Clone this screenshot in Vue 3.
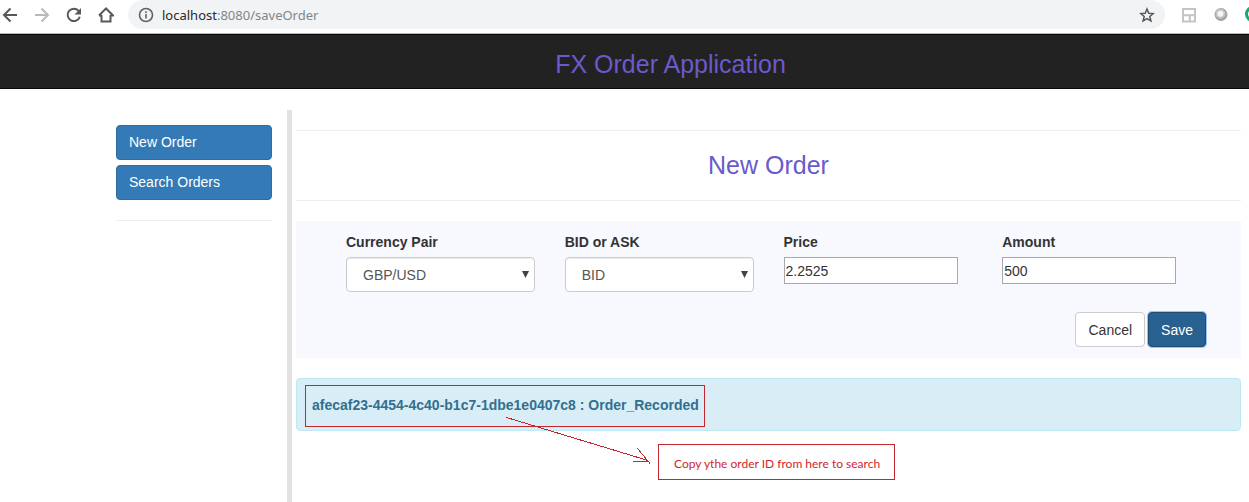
<script setup>
import { ref } from 'vue'

const pair = ref('GBP/USD')
const side = ref('BID')
const price = ref('2.2525')
const amount = ref('500')
const pairs = ['GBP/USD', 'EUR/USD', 'USD/JPY']
const sides = ['BID', 'ASK']
</script>

<template>
  <div class="window">
    <header class="toolbar">
      <button class="tool" type="button" aria-label="Back">
        <svg viewBox="0 0 16 16"><path d="M15 8H2.5M8.500 1.500 2 8l6.500 6.500" /></svg>
      </button>
      <button class="tool faded" type="button" aria-label="Forward">
        <svg viewBox="0 0 16 16"><path d="M1 8h12.500M7.500 1.500 14 8l-6.500 6.500" /></svg>
      </button>
      <button class="tool" type="button" aria-label="Reload">
        <svg viewBox="0 0 16 16"><path d="M13.800 9.800A6.200 6.200 0 1 1 12.600 3.800" /><path class="solid" d="M15 1v6.500H8.500z" /></svg>
      </button>
      <button class="tool" type="button" aria-label="Home">
        <svg viewBox="0 0 16 16"><path d="M3.500 8v6.500h9V8M1 8.500 8 1.500l7 7H12.500M1 8.500h2.500" /></svg>
      </button>
      <div class="address">
        <svg class="info" viewBox="0 0 16 16"><circle cx="8" cy="8" r="6.500" /><path d="M8 7v4.500M8 4.200v1.800" /></svg>
        <span class="url"><span class="host">localhost</span>:8080/saveOrder</span>
        <button class="tool star" type="button" aria-label="Bookmark">
          <svg viewBox="0 0 16 16"><path d="M8 2l1.750 4.200 4.550.350-3.500 2.950 1.100 4.450L8 11.550l-3.900 2.400 1.100-4.450L1.700 6.550l4.550-.350z" /></svg>
        </button>
      </div>
      <button class="tool ext" type="button" aria-label="Layout extension">
        <svg viewBox="0 0 16 16"><path d="M2 2h12v12.500H2zM2 8.200h12M8.800 8.200v6.300" /></svg>
      </button>
      <button class="tool ext" type="button" aria-label="Sphere extension">
        <svg viewBox="0 0 16 16"><circle cx="8" cy="7.500" r="6.500" fill="#a4a4a4" stroke="none" /><circle cx="7.500" cy="6.800" r="4" fill="#f6f6f6" stroke="#c4c4c4" /></svg>
      </button>
      <button class="tool ext last" type="button" aria-label="Green extension">
        <svg viewBox="0 0 16 16"><circle cx="8" cy="7" r="6.500" stroke="#12ad6b" stroke-width="3" /></svg>
      </button>
    </header>

    <nav class="navbar"><h1>FX Order Application</h1></nav>

    <div class="layout">
      <aside class="sidebar">
        <a class="nav-link" href="#new">New Order</a>
        <a class="nav-link" href="#search">Search Orders</a>
        <hr>
      </aside>

      <main class="content">
        <hr>
        <h2>New Order</h2>
        <hr>

        <form class="panel" @submit.prevent>
          <div class="fields">
            <div class="field">
              <label for="pair">Currency Pair</label>
              <div class="select">
                <select id="pair" v-model="pair"><option v-for="p in pairs" :key="p">{{ p }}</option></select>
                <svg viewBox="0 0 8 8"><path d="M0 0h8L4 8z" /></svg>
              </div>
            </div>
            <div class="field">
              <label for="side">BID or ASK</label>
              <div class="select">
                <select id="side" v-model="side"><option v-for="s in sides" :key="s">{{ s }}</option></select>
                <svg viewBox="0 0 8 8"><path d="M0 0h8L4 8z" /></svg>
              </div>
            </div>
            <div class="field">
              <label for="price">Price</label>
              <input id="price" v-model="price" type="text">
            </div>
            <div class="field">
              <label for="amount">Amount</label>
              <input id="amount" v-model="amount" type="text">
            </div>
          </div>
          <div class="actions">
            <button class="btn" type="button">Cancel</button>
            <button class="btn primary" type="submit">Save</button>
          </div>
        </form>

        <div class="alert" role="status">
          <strong>afecaf23-4454-4c40-b1c7-1dbe1e0407c8 : Order_Recorded</strong>
          <svg class="arrow" viewBox="0 0 148 50" shape-rendering="crispEdges">
            <path d="M0.500 1.500 142 44.500M131.500 32.500 144 47.500M126.500 45.500H142.500" />
          </svg>
          <div class="callout">Copy ythe order ID from here to search</div>
        </div>
      </main>
    </div>
  </div>
</template>

<style>
html, body, #app {
  height: 100%;
}
body {
  margin: 0;
  background: #fff;
}
</style>

<style scoped>
.window {
  min-height: 100%;
  display: flex;
  flex-direction: column;
  overflow: hidden;
  color: #333;
  font: 14px/20px "Liberation Sans", Arial, sans-serif;
}
.window * {
  box-sizing: border-box;
}
.toolbar {
  display: flex;
  align-items: center;
  gap: 16px;
  padding: 0 0 4px 2px;
  border-bottom: 1px solid #b9bdb9;
}
.tool {
  flex: none;
  display: block;
  width: 16px;
  height: 16px;
  padding: 0;
  border: 0;
  background: none;
  color: #55585c;
}
svg {
  display: block;
  fill: none;
  stroke: currentColor;
  stroke-width: 2;
}
.tool svg {
  width: 16px;
  height: 16px;
}
.tool .solid {
  fill: currentColor;
  stroke: none;
}
.faded {
  color: #b8babc;
}
.ext {
  color: #c4c4c4;
}
.last {
  margin-right: -12px;
}
.address {
  flex: 1;
  min-width: 0;
  height: 29px;
  margin-left: -2px;
  padding: 0 10px;
  border-radius: 15px;
  background: #f1f3f4;
  display: flex;
  align-items: center;
}
.info {
  width: 16px;
  height: 16px;
  margin-right: 8px;
  color: #5f6368;
  stroke-width: 1.600;
}
.url {
  flex: 1;
  color: #80868b;
  font: 13px/20px "Noto Sans", "Open Sans", sans-serif;
}
.host {
  color: #27292c;
}
.star svg {
  stroke-width: 1.500;
}
.navbar {
  border: 1px solid #080808;
  border-width: 1px 0;
  background: #222;
  text-align: center;
}
h1, h2 {
  margin: 0;
  color: #6a5acd;
  font-size: 25px;
  font-weight: 400;
  text-align: center;
}
h1 {
  padding: 15px 0 10px 92px;
  line-height: 28px;
}
h2 {
  padding: 20px 0;
  line-height: 29px;
}
.layout {
  flex: 1;
  margin-top: 21px;
  display: flex;
}
.sidebar {
  flex: none;
  width: 292px;
  padding: 15px 15px 0 116px;
  border-right: 5px solid #e2e2e2;
}
hr {
  height: 1px;
  margin: 0;
  border: 0;
  background: #eee;
}
.sidebar hr {
  margin-top: 20px;
}
.nav-link {
  display: block;
  margin-bottom: 5px;
  padding: 6px 12px 7px;
  border: 1px solid #2e6da4;
  border-radius: 4px;
  background: #337ab7;
  color: #fff;
  text-decoration: none;
}
.content {
  flex: 1;
  min-width: 0;
  padding: 20px 8px 0 4px;
}
.panel {
  margin: 20px 0;
  padding: 10px 35px 11px 50px;
  background: #f8f8ff;
}
.fields {
  display: grid;
  grid-template-columns: repeat(4, 1fr);
  gap: 30px;
  margin-right: 15px;
}
.field {
  min-width: 0;
}
label {
  display: block;
  margin-bottom: 5px;
  padding-top: 1px;
  font-weight: 700;
}
.select {
  position: relative;
}
.select svg {
  position: absolute;
  top: 14px;
  right: 6px;
  width: 7px;
  height: 7px;
  fill: #444;
  stroke: none;
  pointer-events: none;
}
select {
  display: block;
  width: 100%;
  height: 35px;
  padding: 6px 16px;
  appearance: none;
  border: 1px solid #ccc;
  border-radius: 4px;
  background: #fff;
  box-shadow: inset 0 1px 1px rgba(0, 0, 0, 0.075);
  color: #555;
  font: inherit;
}
input {
  display: block;
  width: 174px;
  max-width: 100%;
  height: 27px;
  padding: 1px;
  border: 1px solid #a9a9a9;
  background: #fff;
  color: #333;
  font: inherit;
}
.actions {
  display: flex;
  justify-content: flex-end;
  gap: 3px;
  margin-top: 20px;
}
.btn {
  height: 35px;
  padding: 0 12px;
  border: 1px solid #ccc;
  border-radius: 4px;
  background: #fff;
  color: #333;
  font: inherit;
}
.primary {
  border-color: #204d74;
  background: #286090;
  box-shadow: 0 0 0 1px #9dc0f5;
  color: #fff;
}
.alert {
  position: relative;
  padding: 16px 15px 15px;
  border: 1px solid #bce8f1;
  border-radius: 4px;
  background: #d9edf7;
  color: #31708f;
}
strong {
  position: relative;
}
strong::after {
  content: "";
  position: absolute;
  inset: -12px -6px -14px -7px;
  border: 1px solid #c1272d;
}
.arrow {
  position: absolute;
  top: 37px;
  left: 209px;
  width: 148px;
  height: 50px;
  color: #c1272d;
  stroke-width: 1;
}
.callout {
  position: absolute;
  top: 65px;
  left: 361px;
  padding: 10px 14px 6px 15px;
  border: 1px solid #c1272d;
  background: #fff;
  color: #d0262c;
  font: 12px/18px Lato, "Open Sans", sans-serif;
  white-space: nowrap;
}
</style>
